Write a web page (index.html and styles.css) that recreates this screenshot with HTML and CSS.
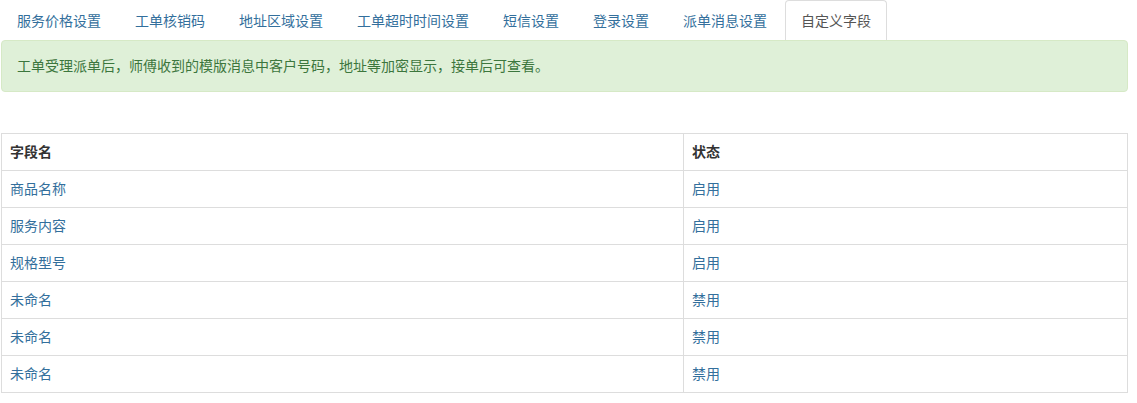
FILE: index.html
```html
<!DOCTYPE html>
<html lang="zh-CN">
<head>
  <meta charset="UTF-8">
  <title>自定义字段</title>
  <link rel="stylesheet" href="styles.css">
</head>
<body>
  <div class="page">
    <ul class="nav-tabs">
      <li><a href="#">服务价格设置</a></li>
      <li><a href="#">工单核销码</a></li>
      <li><a href="#">地址区域设置</a></li>
      <li><a href="#">工单超时时间设置</a></li>
      <li><a href="#">短信设置</a></li>
      <li><a href="#">登录设置</a></li>
      <li><a href="#">派单消息设置</a></li>
      <li class="active"><a href="#">自定义字段</a></li>
    </ul>

    <div class="alert">工单受理派单后，师傅收到的模版消息中客户号码，地址等加密显示，接单后可查看。</div>

    <table class="field-table">
      <thead>
        <tr>
          <th class="col-name">字段名</th>
          <th>状态</th>
        </tr>
      </thead>
      <tbody>
        <tr><td><a href="#">商品名称</a></td><td><a href="#">启用</a></td></tr>
        <tr><td><a href="#">服务内容</a></td><td><a href="#">启用</a></td></tr>
        <tr><td><a href="#">规格型号</a></td><td><a href="#">启用</a></td></tr>
        <tr><td><a href="#">未命名</a></td><td><a href="#">禁用</a></td></tr>
        <tr><td><a href="#">未命名</a></td><td><a href="#">禁用</a></td></tr>
        <tr><td><a href="#">未命名</a></td><td><a href="#">禁用</a></td></tr>
      </tbody>
    </table>
  </div>
</body>
</html>
```

FILE: styles.css
```css
body {
  margin: 0;
  font-family: "Liberation Sans", "Noto Sans CJK SC", sans-serif;
  font-size: 14px;
  line-height: 20px;
  color: #333;
  background-color: #fff;
}
a {
  color: #336f9c;
  text-decoration: none;
}
.page {
  width: 1127px;
  margin-left: 1px;
}
.nav-tabs {
  display: flex;
  margin: 0;
  padding: 0;
  list-style: none;
}
.nav-tabs li {
  margin-right: 2px;
}
.nav-tabs a {
  display: block;
  padding: 10px 15px 9px;
  border: 1px solid transparent;
  border-bottom: none;
  border-radius: 4px 4px 0 0;
}
.nav-tabs .active a {
  color: #555;
  background-color: #fff;
  border-color: #ddd;
}
.alert {
  padding: 15px;
  margin-bottom: 41px;
  color: #3c763d;
  background-color: #dff0d8;
  border: 1px solid #d6e9c6;
  border-radius: 4px;
}
.field-table {
  width: 100%;
  border-collapse: collapse;
  border: 1px solid #ddd;
}
.field-table th,
.field-table td {
  padding: 8px;
  text-align: left;
  border: 1px solid #ddd;
}
.field-table th {
  font-weight: bold;
  color: #333;
}
.field-table .col-name {
  width: 665px;
}
```
